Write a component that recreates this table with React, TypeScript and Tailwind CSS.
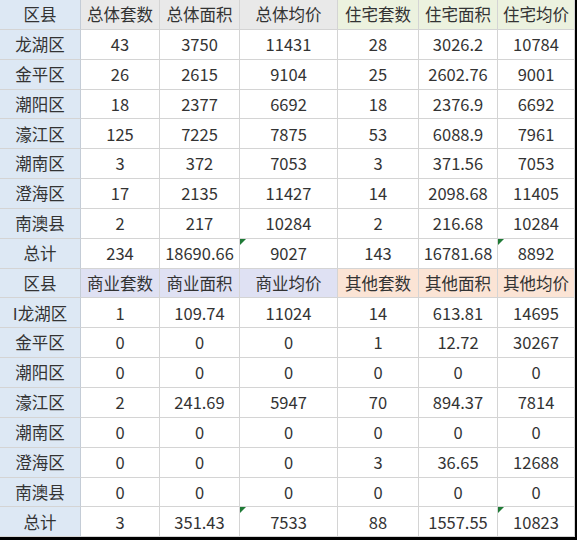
const cols = ["w-[81px]", "w-[79px]", "w-[80px]", "w-[98px]", "w-[81px]", "w-[79px]", "w-[77px]"];

type Row = { cells: string[]; header?: "top" | "bottom"; flags?: number[] };

const rows: Row[] = [
  { cells: ["区县", "总体套数", "总体面积", "总体均价", "住宅套数", "住宅面积", "住宅均价"], header: "top" },
  { cells: ["龙湖区", "43", "3750", "11431", "28", "3026.2", "10784"] },
  { cells: ["金平区", "26", "2615", "9104", "25", "2602.76", "9001"] },
  { cells: ["潮阳区", "18", "2377", "6692", "18", "2376.9", "6692"] },
  { cells: ["濠江区", "125", "7225", "7875", "53", "6088.9", "7961"] },
  { cells: ["潮南区", "3", "372", "7053", "3", "371.56", "7053"] },
  { cells: ["澄海区", "17", "2135", "11427", "14", "2098.68", "11405"] },
  { cells: ["南澳县", "2", "217", "10284", "2", "216.68", "10284"] },
  { cells: ["总计", "234", "18690.66", "9027", "143", "16781.68", "8892"], flags: [3, 6] },
  { cells: ["区县", "商业套数", "商业面积", "商业均价", "其他套数", "其他面积", "其他均价"], header: "bottom" },
  { cells: ["I龙湖区", "1", "109.74", "11024", "14", "613.81", "14695"] },
  { cells: ["金平区", "0", "0", "0", "1", "12.72", "30267"] },
  { cells: ["潮阳区", "0", "0", "0", "0", "0", "0"] },
  { cells: ["濠江区", "2", "241.69", "5947", "70", "894.37", "7814"] },
  { cells: ["潮南区", "0", "0", "0", "0", "0", "0"] },
  { cells: ["澄海区", "0", "0", "0", "3", "36.65", "12688"] },
  { cells: ["南澳县", "0", "0", "0", "0", "0", "0"] },
  { cells: ["总计", "3", "351.43", "7533", "88", "1557.55", "10823"], flags: [3, 6] },
];

function cellBg(row: Row, i: number) {
  if (i === 0) return "bg-[#dde8f4]";
  if (row.header === "top") return i <= 3 ? "bg-[#e9e9e9]" : "bg-[#ecf2df]";
  if (row.header === "bottom") return i <= 3 ? "bg-[#dfe1f3]" : "bg-[#fbe4d5]";
  return "bg-white";
}

export default function App() {
  return (
    <div className="w-[577px] h-[541px] bg-white overflow-hidden">
      <div
        className="w-[577px] border-r-[2px] border-b-[3px] border-black text-[16.5px] text-[#333333]"
        style={{ fontFamily: '"Noto Sans CJK SC", "Noto Sans", sans-serif' }}
      >
        {rows.map((row, r) => (
          <div key={r} className="flex">
            {row.cells.map((c, i) => (
              <div
                key={i}
                className={`${cols[i]} ${cellBg(row, i)} relative h-[29.85px] shrink-0 flex items-center justify-center border-r border-b ${
                  i === 0 ? "border-r-[#c4ccd6]" : "border-r-[#d4d4d4]"
                } border-b-[#d4d4d4] leading-none whitespace-nowrap`}
              >
                {row.flags?.includes(i) && (
                  <span className="absolute left-0 top-0 w-0 h-0 border-t-[6px] border-t-[#1f7a36] border-r-[6px] border-r-transparent" />
                )}
                {c}
              </div>
            ))}
          </div>
        ))}
      </div>
    </div>
  );
}
